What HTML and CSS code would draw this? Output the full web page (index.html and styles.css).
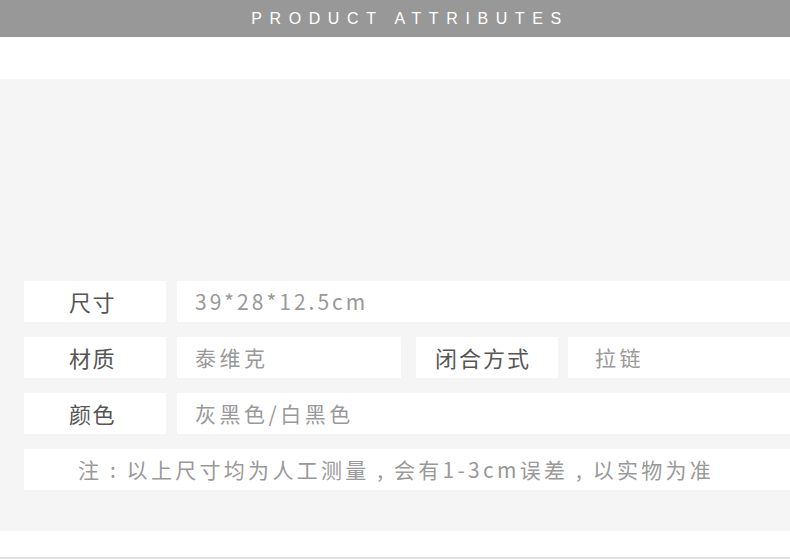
FILE: index.html
```html
<!DOCTYPE html>
<html lang="zh">
<head>
<meta charset="utf-8">
<title>Product Attributes</title>
<link rel="stylesheet" href="styles.css">
</head>
<body>
<header class="title-bar"><h1 class="title">PRODUCT ATTRIBUTES</h1></header>
<div class="spacer"></div>
<section class="panel">
  <div class="row">
    <div class="label">尺寸</div>
    <div class="value value-num">39*28*12.5cm</div>
  </div>
  <div class="row">
    <div class="label">材质</div>
    <div class="value value-mid">泰维克</div>
    <div class="label label-2">闭合方式</div>
    <div class="value value-2">拉链</div>
  </div>
  <div class="row">
    <div class="label">颜色</div>
    <div class="value">灰黑色/白黑色</div>
  </div>
  <div class="row">
    <div class="note">注<span class="punct">:</span>以上尺寸均为人工测量<span class="punct">,</span>会有1-3cm误差<span class="punct">,</span>以实物为准</div>
  </div>
</section>
<div class="bottom-space"></div>
<div class="bottom-line"></div>
</body>
</html>
```
FILE: styles.css
```css
html, body {
  margin: 0;
  padding: 0;
  background: #fff;
  font-family: "Noto Sans CJK SC", "Noto Sans", sans-serif;
}
.title-bar {
  height: 37px;
  background: #989898;
  display: flex;
  align-items: center;
  justify-content: center;
}
.title {
  margin: 0 0 0 30px;
  font-family: "Liberation Sans", Arial, sans-serif;
  font-weight: normal;
  font-size: 16px;
  letter-spacing: 7.6px;
  color: #fff;
  line-height: 1;
}
.spacer { height: 42px; }
.panel {
  background: #f5f5f5;
  padding: 202px 0 41px 24px;
  display: flex;
  flex-direction: column;
  gap: 15px;
}
.row {
  display: flex;
  height: 41px;
  gap: 11px;
}
.label {
  width: 142px;
  flex: none;
  box-sizing: border-box;
  background: #fff;
  color: #555;
  font-size: 22px;
  letter-spacing: 1.5px;
  display: flex;
  align-items: center;
  justify-content: center;
  padding-bottom: 2px;
  padding-right: 5px;
}
.value {
  flex: 1;
  background: #fff;
  color: #999;
  font-size: 21px;
  letter-spacing: 3.5px;
  display: flex;
  align-items: center;
  padding-left: 18px;
  padding-bottom: 2px;
}
.value-num { letter-spacing: 3px; }
.value-mid { flex: none; width: 206px; }
.label-2 { margin-left: 4px; padding-right: 8px; letter-spacing: 2px; }
.value-2 { padding-left: 27px; margin-left: -1px; }
.note {
  flex: 1;
  background: #fff;
  color: #999;
  font-size: 21px;
  letter-spacing: 3.3px;
  display: flex;
  align-items: center;
  padding-left: 54px;
  padding-bottom: 2px;
  white-space: pre;
}
.punct {
  display: inline-block;
  width: 21px;
  text-align: center;
  margin-right: 3.3px;
  letter-spacing: 0;
}
.bottom-space { height: 26px; }
.bottom-line { height: 3px; background: #e0e0e0; }
```
